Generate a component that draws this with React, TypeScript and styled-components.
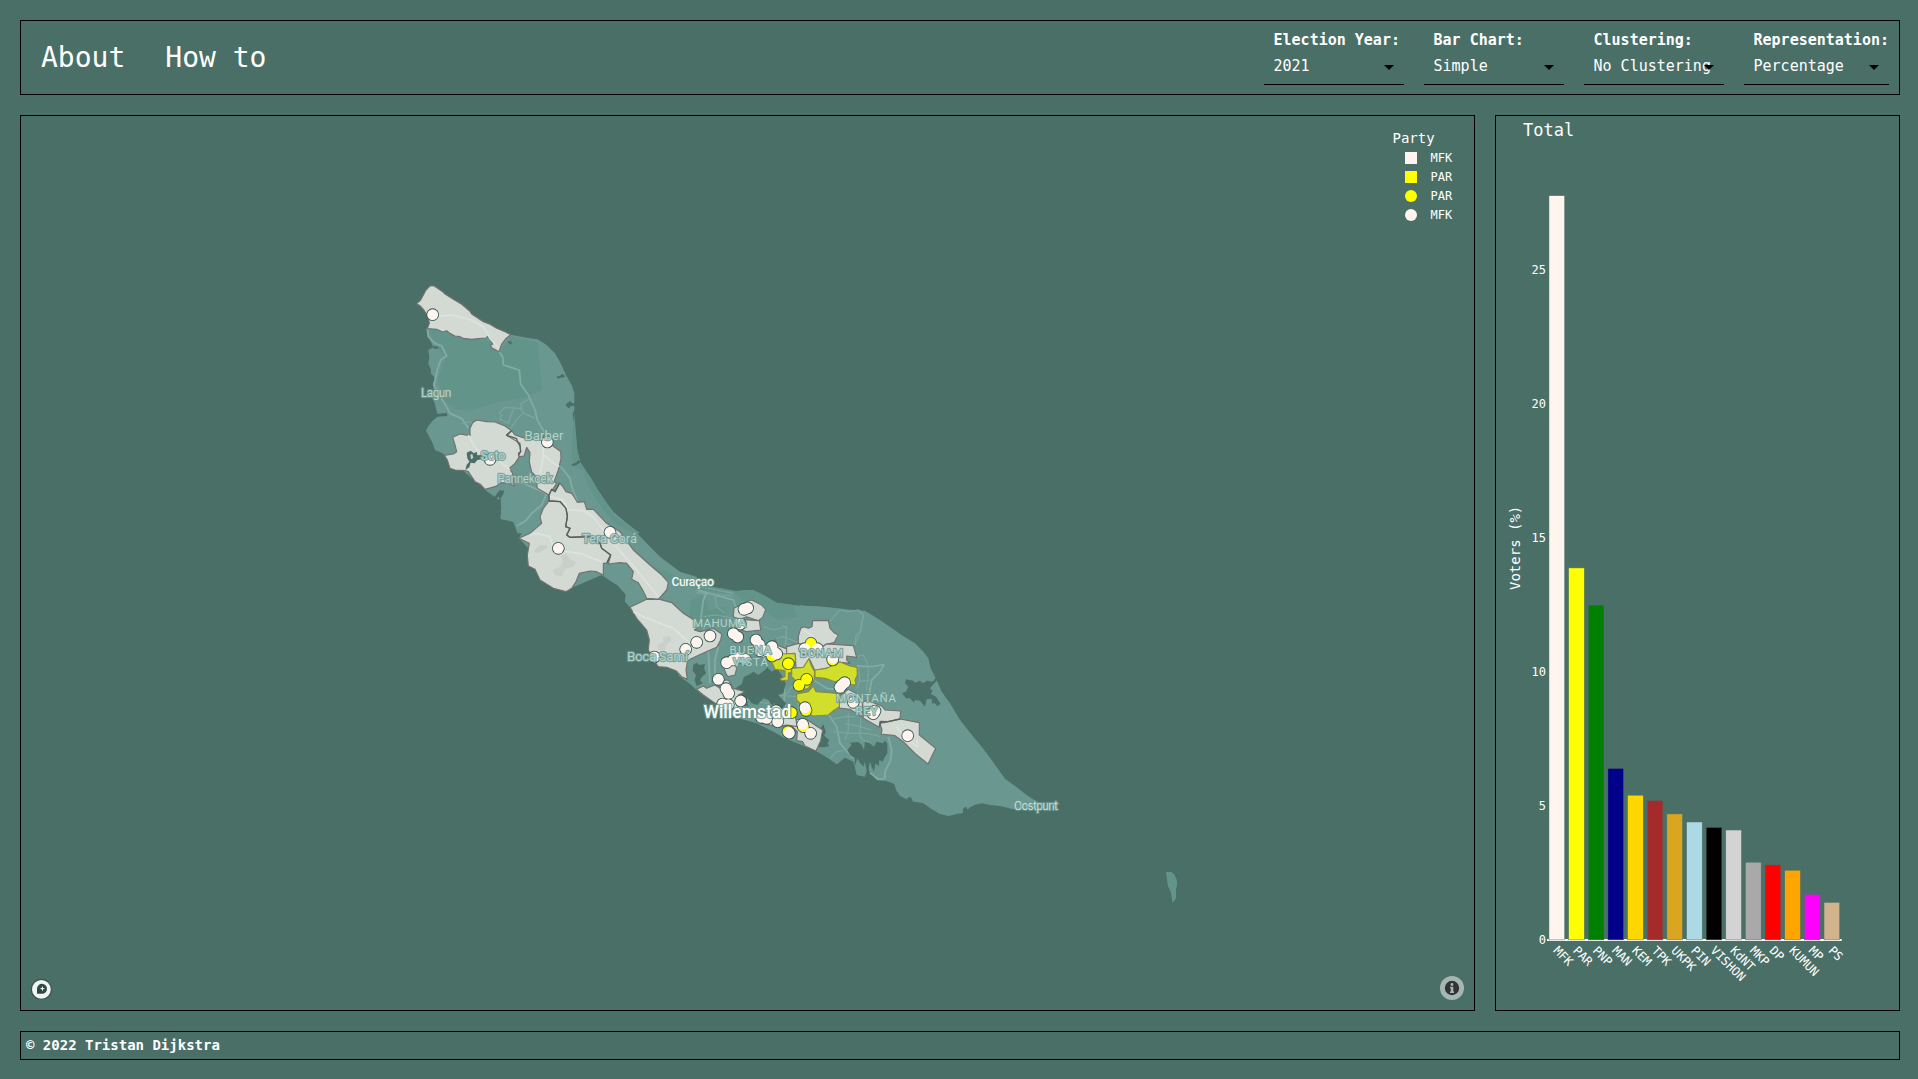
import React from "react";
import styled, { createGlobalStyle } from "styled-components";

const BG = "#4a6f67";
const MONO = '"DejaVu Sans Mono", "Liberation Mono", monospace';
const LABEL_FONT = 'Roboto, "Open Sans", sans-serif';
const SEASHELL = "#fff5ee";

const GlobalStyle = createGlobalStyle`
  * { box-sizing: border-box; }
  body { margin: 0; background: ${BG}; color: #fff; font-family: ${MONO}; }
`;

const Page = styled.div`
  display: grid;
  grid-template-columns: minmax(0, 1fr) 405px;
  grid-template-rows: 75px minmax(0, 1fr) 29px;
  gap: 20px;
  height: 1079px;
  padding: 20px 18px 19px 20px;
`;

const Header = styled.header`
  grid-column: 1 / -1;
  display: flex;
  justify-content: space-between;
  border: 1px solid #000;
`;

const Nav = styled.nav`
  display: flex;
  align-items: center;
  gap: 40px;
  padding-left: 20px;
`;

const NavLink = styled.a`
  color: #fff;
  font-size: 28px;
  line-height: 33px;
`;

const Filters = styled.div`
  display: flex;
  align-items: flex-start;
  gap: 20px;
  padding: 10px 10px 0 0;
`;

const Filter = styled.div`
  min-width: 140px;
`;

const FilterLabel = styled.div`
  padding-left: 10px;
  font-size: 15px;
  font-weight: 700;
  line-height: 18px;
`;

const FilterValue = styled.div`
  position: relative;
  height: 36px;
  padding: 8px 0 0 10px;
  border-bottom: 1px solid #000;
  font-size: 15px;
  line-height: 18px;
  white-space: nowrap;

  &::after {
    content: "";
    position: absolute;
    top: 16px;
    right: 10px;
    border: 5px solid transparent;
    border-top-color: #000;
    border-bottom-width: 0;
  }
`;

const MapPanel = styled.section`
  position: relative;
  border: 1px solid #000;
  overflow: hidden;
`;

const Canvas = styled.svg`
  display: block;
  width: 100%;
  height: 100%;
`;

const Legend = styled.aside`
  position: absolute;
  top: 13px;
  right: 20px;
  width: 61.5px;
`;

const LegendTitle = styled.div`
  font-size: 14px;
  line-height: 18px;
  padding-bottom: 1px;
`;

const LegendRow = styled.div`
  display: flex;
  align-items: center;
  gap: 14px;
  height: 19px;
  padding-left: 12px;
  font-size: 12px;
`;

const Swatch = styled.span<{ $color: string; $round?: boolean }>`
  flex: none;
  width: 12px;
  height: 12px;
  background: ${(p) => p.$color};
  border-radius: ${(p) => (p.$round ? "50%" : "0")};
`;

const ChartPanel = styled.section`
  border: 1px solid #000;
  overflow: hidden;
`;

const Footer = styled.footer`
  grid-column: 1 / -1;
  padding-left: 5px;
  border: 1px solid #000;
  font-size: 14px;
  font-weight: 700;
  line-height: 27px;
`;

const filters = [
  ["Election Year:", "2021"],
  ["Bar Chart:", "Simple"],
  ["Clustering:", "No Clustering"],
  ["Representation:", "Percentage"],
];

const legend = [
  { name: "MFK", color: SEASHELL, round: false },
  { name: "PAR", color: "#ffff00", round: false },
  { name: "PAR", color: "#ffff00", round: true },
  { name: "MFK", color: SEASHELL, round: true },
];

const parties: [string, number, string][] = [
  ["MFK", 27.77, SEASHELL],
  ["PAR", 13.88, "yellow"],
  ["PNP", 12.49, "green"],
  ["MAN", 6.4, "darkblue"],
  ["KEM", 5.4, "gold"],
  ["TPK", 5.2, "brown"],
  ["UKPK", 4.7, "goldenrod"],
  ["PIN", 4.4, "lightblue"],
  ["VISHON", 4.2, "black"],
  ["KdNT", 4.1, "lightgray"],
  ["MKP", 2.9, "darkgray"],
  ["DP", 2.8, "red"],
  ["KUMUN", 2.6, "orange"],
  ["MP", 1.7, "magenta"],
  ["PS", 1.4, "tan"],
];

/* Map geometry is kept in tiles: each has an origin on the page and three units per pixel. */
type Tile = { x: number; y: number };
const NORTH: Tile = { x: 400, y: 270 };
const WEST: Tile = { x: 420, y: 400 };
const HARBOUR: Tile = { x: 600, y: 560 };
const CENTRE: Tile = { x: 680, y: 580 };
const EAST: Tile = { x: 800, y: 580 };
const KLEIN: Tile = { x: 1130, y: 850 };

type Kind = "land" | "park" | "water" | "white" | "yellow" | "road" | "lightRoad" | "border" | "shade" | "thinRoad";

const styles: Record<Kind, React.SVGProps<SVGPolylineElement>> = {
  land: { fill: "#6a978f" },
  park: { fill: "#62948a" },
  water: { fill: BG },
  white: { fill: "#d3dad4", stroke: "#73716f", strokeWidth: 3.4 },
  yellow: { fill: "#d1df2b", stroke: "#8b8a3c", strokeWidth: 3.4 },
  road: { fill: "none", stroke: "#82aba3", strokeWidth: 5.5 },
  thinRoad: { fill: "none", stroke: "#7ba69d", strokeWidth: 3.6 },
  lightRoad: { fill: "none", stroke: "#dde3de", strokeWidth: 5 },
  border: { fill: "none", stroke: "#5d5f5d", strokeWidth: 4 },
  shade: { fill: "#c9cfc9" },
};

const shapes: [Tile, Kind, string][] = [
  [NORTH, "land", "82,176 332,194 380,203 413,208 440,225 465,250 483,282 498,315 515,345 523,370 523,420 518,432 525,480 532,540 540,575 550,590 570,620 590,655 610,685 640,725 680,760 720,790 352,790 340,755 304,748 302,715 297,698 282,680 255,658 140,560 125,548 105,540 98,520 88,500 78,482 85,468 98,452 112,440 142,438 140,428 112,432 104,400 98,385 102,365 98,340 105,330 102,320 92,310 93,300 85,282 88,262 85,240 100,232 95,220 85,200"],
  [WEST, "land", "250,230 480,185 488,200 510,230 530,265 560,310 580,345 620,375 650,398 690,440 720,470 780,515 830,530 830,660 700,660 630,622 615,605 618,580 600,560 575,545 545,525 440,570 297,415 305,400 292,385 285,368 270,362 241,356 244,330 237,310 220,290 195,270"],
  [HARBOUR, "land", "-20,-80 115,0 150,15 200,35 240,55 300,75 380,88 410,94 460,90 490,105 530,130 560,137 600,140 600,550 570,535 530,505 470,490 400,470 345,430 300,400 270,372 240,350 90,142 75,122 78,105 60,85 45,65 20,48 0,45"],
  [CENTRE, "land", "160,34 200,30 220,32 250,45 290,68 340,75 370,78 430,80 500,88 500,505 460,545 445,535 408,513 315,475 280,455 230,430 200,410 160,390"],
  [EAST, "land", "0,76 60,80 130,88 195,92 240,120 305,165 345,190 370,215 385,235 392,265 405,290 412,305 425,335 450,370 480,420 520,470 545,500 575,540 615,596 645,618 680,645 715,668 700,680 640,688 600,678 575,676 545,670 525,674 510,682 495,698 470,702 445,708 420,702 395,688 370,670 330,663 300,648 288,630 283,612 262,604 230,600 208,575 204,560 195,590 170,585 164,560 160,545 135,533 110,553 85,535 45,510 0,480"],
  [KLEIN, "park", "108,66 124,66 134,74 141,92 141,106 138,118 138,145 132,154 126,157 126,146 122,125 114,108 111,90"],

  [NORTH, "park", "86,180 140,184 200,207 275,212 300,245 332,198 413,218 426,360 370,385 300,394 210,422 165,416 130,390 113,330 138,262 100,222"],
  [NORTH, "park", "523,430 527,480 532,540 540,575 550,600 520,590 514,555 517,500"],
  [WEST, "park", "488,200 510,230 530,265 560,310 580,345 620,375 650,398 625,392 580,365 545,320 505,260"],
  [HARBOUR, "park", "270,125 305,105 330,150 380,140 375,175 330,190 280,215 270,200"],
  [HARBOUR, "park", "115,0 150,15 200,35 240,55 300,75 380,88 370,100 290,86 230,70 160,38"],
  [CENTRE, "park", "160,34 220,32 250,45 290,68 340,75 350,110 290,120 240,80 190,62"],
  [NORTH, "water", "470,318 480,319 484,312 494,316 494,322 480,323 474,327"],
  [NORTH, "water", "497,402 505,398 510,392 516,400 524,400 524,407 512,408 508,415 500,410"],
  [NORTH, "water", "512,584 528,578 534,570 542,577 530,584 520,588"],
  [NORTH, "water", "98,228 116,230 114,236 102,236"],
  [NORTH, "water", "324,215 332,212 337,219 328,224"],
  [NORTH, "water", "290,672 300,660 312,664 306,676 302,683 294,680 288,690 284,680"],
  [WEST, "water", "195,270 237,300 240,276 252,270 250,282 242,296 244,330"],

  [NORTH, "road", "82,176 85,200 105,220 125,228 140,258 122,270 112,300 102,345 125,385 150,430 185,445 205,475"],
  [NORTH, "road", "297,245 308,260 310,285 358,300 362,342 385,375 405,420 412,450 435,490"],
  [NORTH, "thinRoad", "300,448 305,435 298,428 315,412 365,416 362,402 388,388"],
  [NORTH, "thinRoad", "340,418 330,445 325,460 300,448"],
  [NORTH, "thinRoad", "370,428 345,455 330,480"],
  [NORTH, "thinRoad", "365,416 372,430 405,445"],
  [NORTH, "thinRoad", "185,460 210,455 222,465"],
  [NORTH, "road", "482,590 510,625 515,650 530,690 560,740"],
  [NORTH, "road", "340,635 370,640 440,670 425,705 395,730 378,752 350,768"],

  [HARBOUR, "road", "290,90 320,98 400,120 410,150 400,200"],
  [HARBOUR, "thinRoad", "290,78 400,100"],
  [HARBOUR, "thinRoad", "288,98 398,108"],
  [HARBOUR, "road", "320,98 310,120 302,180 320,230 325,270 330,370"],
  [HARBOUR, "thinRoad", "310,170 350,165 400,175"],
  [HARBOUR, "thinRoad", "345,106 350,140 375,160"],
  [HARBOUR, "thinRoad", "410,150 450,210 510,260 540,260"],
  [HARBOUR, "thinRoad", "490,200 520,210 560,200 555,260"],
  [HARBOUR, "thinRoad", "530,235 550,230 600,250"],
  [HARBOUR, "road", "345,360 345,300 355,260"],
  [HARBOUR, "thinRoad", "440,420 500,430 560,400 600,350"],
  [CENTRE, "thinRoad", "308,135 320,145 318,190 350,200"],
  [CENTRE, "thinRoad", "450,125 478,90 505,95 535,90 550,105 540,155 525,195"],
  [CENTRE, "road", "315,300 312,370 345,440"],
  [CENTRE, "road", "400,300 440,325 480,330 510,335"],
  [CENTRE, "thinRoad", "290,345 350,350 360,410"],
  [EAST, "thinRoad", "165,230 190,225 202,250 205,280 200,330"],
  [EAST, "thinRoad", "175,90 190,105 182,155 168,165 165,195"],
  [EAST, "road", "170,258 215,260 252,254 240,275 215,300 208,340"],
  [EAST, "thinRoad", "175,305 210,300"],
  [EAST, "thinRoad", "175,262 180,300 170,325"],
  [EAST, "road", "85,402 110,440 120,490 160,535"],
  [EAST, "thinRoad", "90,418 140,410 165,410"],
  [EAST, "thinRoad", "100,455 150,460 205,460 240,470"],
  [EAST, "thinRoad", "145,400 145,450 135,480"],
  [EAST, "thinRoad", "182,415 180,470 190,480 212,490 215,515"],
  [EAST, "thinRoad", "135,430 180,440 215,450"],
  [EAST, "road", "265,470 275,510 272,540 255,575 255,595 235,598 210,578"],
  [EAST, "thinRoad", "90,535 110,515 140,510"],

  [EAST, "water", "306,340 318,335 325,320 315,310 318,298 340,302 345,308 360,302 368,310 382,302 398,305 410,290 412,300 398,315 390,325 398,332 392,342 408,350 422,372 412,378 402,368 396,372 395,356 380,358 375,380 360,362 345,360 342,368 330,355 318,355"],
  [EAST, "water", "142,510 155,495 150,488 175,486 185,495 192,510 195,485 210,490 222,500 230,485 250,490 254,482 262,490 262,520 255,530 248,545 238,540 236,558 226,550 222,575 215,560 210,545 202,580 194,545 190,560 178,545 172,535 164,560 165,535 150,525"],
  [EAST, "water", "62,445 70,432 76,455 70,465 88,480 82,490 88,498 72,502 55,500"],
  [EAST, "water", "255,610 262,622 278,624 286,632 270,620"],
  [EAST, "water", "320,655 332,650 338,662 330,668"],
  [EAST, "water", "488,700 490,684 498,680 504,690 496,698"],
  [CENTRE, "water", "40,255 50,248 58,255 75,252 72,265 78,280 66,290 60,300 68,310 50,318 44,300 48,285 38,272"],
  [CENTRE, "water", "160,330 185,312 192,290 205,285 220,275 235,285 255,270 262,262 275,275 290,265 305,285 318,310 310,340 295,345 318,370 305,395 285,370 275,375 265,360 250,355 232,375 215,370 200,352 205,380 190,372 195,350 170,348 155,342 130,320 118,318 128,310"],
  [CENTRE, "water", "420,465 428,455 430,440 438,455 430,470 445,480 438,500 418,502"],

  [NORTH, "white", "50,101 62,90 78,60 91,47 103,48 128,65 135,72 160,88 185,103 210,124 215,132 250,155 270,163 290,175 315,185 332,194 318,205 305,222 297,245 275,233 272,225 279,222 275,210 265,198 258,204 235,206 215,208 190,205 180,200 165,198 150,190 140,182 128,186 110,178 82,176 88,160 85,140 70,118 60,107"],
  [NORTH, "white", "218,458 230,450 260,455 285,456 315,468 335,482 320,494 348,505 362,530 362,545 355,565 345,580 328,595 338,610 342,648 325,640 305,638 285,650 255,658 240,642 225,635 215,620 205,605 195,602 165,600 150,595 142,570 133,556 160,552 170,545 165,525 158,502 180,492 210,497 210,475"],
  [NORTH, "white", "335,482 345,495 370,503 390,510 430,500 455,525 482,545 483,565 475,600 462,635 470,640 447,675 430,665 412,655 408,620 395,606 388,575 390,548 380,532 372,558 358,560 355,550 362,545 360,520 320,496"],
  [WEST, "white", "387,303 387,285 395,268 405,275 418,248 430,262 438,275 455,280 462,290 472,307 493,305 500,328 520,328 560,370 600,395 640,450 690,495 725,525 745,548 740,570 715,598 680,595 668,570 655,548 635,538 640,515 620,490 600,488 565,492 572,465 545,445 540,430 510,410 450,412 440,405 450,385 437,380 442,350 438,325 420,305"],
  [WEST, "white", "387,303 420,305 438,325 442,350 437,380 450,385 440,405 450,412 510,410 540,430 545,445 572,465 560,490 550,490 550,525 530,515 510,513 478,520 468,545 455,565 438,575 400,565 360,540 345,508 325,498 322,465 328,430 318,425 297,415 330,400 365,370 360,350 370,325"],
  [WEST, "shade", "398,510 420,500 430,485 422,468 440,462 450,478 468,485 460,500 440,505 430,515 428,530 405,525"],
  [WEST, "shade", "340,455 360,435 380,435 382,445 355,460"],
  [HARBOUR, "white", "90,142 140,118 180,118 215,128 250,160 290,185 297,200 283,210 300,215 340,205 365,222 362,240 350,262 325,272 270,298 262,305 258,330 262,358 245,350 228,332 200,322 175,320 160,300 145,270 148,240 140,210 110,175"],
  [HARBOUR, "shade", "172,255 190,245 188,230 210,228 215,240 200,255 195,270 175,270"],
  [HARBOUR, "white", "400,170 402,145 440,125 455,120 485,135 497,148 488,172 475,182 440,170 420,178"],
  [HARBOUR, "white", "400,190 420,178 478,182 482,210 440,215 405,205"],
  [HARBOUR, "white", "380,345 370,322 395,300 410,325 405,345 385,350"],
  [HARBOUR, "white", "290,388 310,378 320,385 345,375 360,385 358,362 385,360 400,385 435,395 415,405 440,425 430,455 380,440 345,430 310,405"],
  [CENTRE, "white", "205,210 240,190 275,192 285,178 290,195 315,205 345,210 345,222 300,228 270,240 235,228"],
  [CENTRE, "white", "346,218 355,200 355,170 362,145 372,140 385,145 396,140 398,122 445,121 450,145 462,158 475,165 462,188 440,192 425,200 350,225"],
  [CENTRE, "white", "320,200 355,190 420,205 440,192 520,197 530,232 500,228 500,240 510,250 480,247 450,262 405,272 388,236 375,265 348,262 346,225 320,225"],
  [CENTRE, "white", "330,432 352,418 382,420 428,450 422,482 408,513 375,498 368,485 350,482 352,455"],
  [CENTRE, "white", "225,400 250,385 345,405 352,440 320,435 290,440 240,428"],
  [EAST, "white", "118,350 145,328 165,338 188,360 185,410 150,388 118,384"],
  [EAST, "white", "188,365 205,362 245,378 255,390 302,393 300,417 265,425 240,424 238,442 190,415"],
  [EAST, "white", "240,430 265,425 300,417 358,428 358,465 407,505 384,552 345,520 310,485 285,467 243,462 246,450"],
  [CENTRE, "yellow", "270,235 305,222 345,220 347,240 335,258 335,275 325,280 325,300 305,302 300,296 315,290 315,272 285,268"],
  [CENTRE, "yellow", "335,265 370,262 387,236 393,255 404,275 402,300 385,325 360,332 342,325 345,300 335,290"],
  [CENTRE, "yellow", "405,270 440,265 480,246 510,258 531,262 532,285 525,300 528,315 500,312 490,302 465,305 435,295 405,292"],
  [CENTRE, "yellow", "350,342 385,335 400,318 408,335 450,338 480,342 478,380 460,392 445,405 400,408 375,395 370,380 350,360"],

  [NORTH, "lightRoad", "98,140 155,135 215,150 250,170 270,205 295,235"],
  [NORTH, "lightRoad", "205,495 220,525 250,560 300,575 330,600"],
  [NORTH, "lightRoad", "430,520 430,555 455,575 478,590"],
  [NORTH, "lightRoad", "430,560 420,610"],
  [WEST, "lightRoad", "390,290 430,300 445,330 490,332 520,350 580,430 650,510 715,590"],
  [WEST, "lightRoad", "330,405 350,400 390,410 400,450 480,460 545,485"],
  [HARBOUR, "lightRoad", "100,155 140,175 220,205 270,250"],
  [CENTRE, "lightRoad", "372,150 400,170 410,200"],
  [EAST, "lightRoad", "290,440 320,480 355,500 350,480"],
  [NORTH, "water", "200,548 212,542 222,550 230,545 232,556 245,555 248,568 232,570 224,580 212,578 208,592 196,600 200,584 208,575 202,565"],
  [NORTH, "shade", "211,554 217,552 220,564 213,568"],
  [NORTH, "border", "335,482 320,496 350,506 352,515 360,528 362,545 355,556"],
  [NORTH, "border", "447,692 447,675 455,658 465,665 478,642"],
  [WEST, "border", "387,303 420,305 438,325 442,350 437,380 450,385 440,405 450,412 510,410 540,430 545,445 572,465 560,490"],
  [EAST, "border", "238,438 242,426 265,425 300,417"],
];

/* Polling stations: tile, winning party, then x,y pairs; drawn in order. */
const stations: [Tile, "w" | "y", number[][]][] = [
  [NORTH, "w", [[98, 134], [442, 516], [270, 568]]],
  [WEST, "w", [[570, 397], [415, 445]]],
  [HARBOUR, "w", [[163, 291], [257, 268], [290, 247], [330, 228], [432, 148], [443, 144], [421, 192], [400, 221], [413, 231]]],
  [CENTRE, "y", [[276, 228], [393, 190]]],
  [HARBOUR, "w", [[468, 240], [478, 254], [480, 272], [500, 272], [516, 260], [525, 278], [530, 282], [436, 298], [415, 292], [400, 300], [380, 308], [355, 358], [378, 386], [386, 400], [368, 432], [385, 434], [422, 423], [484, 472], [500, 475], [528, 452], [540, 462], [533, 485]]],
  [CENTRE, "y", [[325, 251], [357, 316], [380, 298], [334, 398], [458, 240], [378, 391], [370, 440], [324, 455]]],
  [CENTRE, "w", [[374, 206], [412, 206], [459, 235], [480, 322], [486, 315], [494, 308], [375, 383], [368, 433], [392, 460], [328, 459]]],
  [EAST, "y", [[218, 399]]],
  [EAST, "w", [[160, 367], [220, 401], [225, 393], [323, 467]]],
];

type Place = { t: string; x: number; y: number; w: number; s: number; c?: string; b?: number };
const places: Place[] = [
  { t: "Lagun", x: 421, y: 397, w: 30.5, s: 12 },
  { t: "Barber", x: 524.5, y: 440, w: 39, s: 13, c: "#b2d3cc" },
  { t: "Soto", x: 480.5, y: 460, w: 25, s: 13, c: "#b2d3cc" },
  { t: "Pannekoek", x: 497.5, y: 483, w: 55, s: 12, c: "#b2d3cc" },
  { t: "Tera Corá", x: 582, y: 543, w: 55, s: 13, c: "#b2d3cc" },
  { t: "Curaçao", x: 671.5, y: 585.5, w: 42.5, s: 12.5, c: "#f1f8f6", b: 500 },
  { t: "MAHUMA", x: 693, y: 627, w: 53, s: 11.5, c: "#b2d3cc" },
  { t: "BUENA", x: 729.5, y: 653.5, w: 42, s: 11.5, c: "#b2d3cc" },
  { t: "VISTA", x: 733, y: 666, w: 35, s: 11.5, c: "#b2d3cc" },
  { t: "Boca Samí", x: 627, y: 661, w: 61, s: 13.5, c: "#b2d3cc" },
  { t: "BONAM", x: 800, y: 656.5, w: 43, s: 11.5, c: "#b2d3cc" },
  { t: "MONTAÑA", x: 836, y: 701.5, w: 60, s: 11.5, c: "#b2d3cc" },
  { t: "REY", x: 855.5, y: 714.5, w: 22, s: 11.5, c: "#b2d3cc" },
  { t: "Willemstad", x: 703.5, y: 717.5, w: 87.5, s: 17.5, c: "#ffffff", b: 500 },
  { t: "Oostpunt", x: 1014, y: 810, w: 44, s: 12, c: "#c5dcd8" },
];

const place = (t: Tile) => `translate(${t.x} ${t.y}) scale(${1 / 3})`;

function IslandMap() {
  return (
    <Canvas viewBox="21 116 1453 894">
      {shapes.map(([tile, kind, points], i) => {
        const open = styles[kind].fill === "none";
        return (
          <g key={i} transform={place(tile)}>
            {open ? (
              <polyline points={points} strokeLinejoin="round" {...styles[kind]} />
            ) : (
              <polygon points={points} strokeLinejoin="round" {...(styles[kind] as React.SVGProps<SVGPolygonElement>)} />
            )}
          </g>
        );
      })}
      {/* Outlines go below every fill, so that neighbouring stations merge. */}
      {stations.map(([tile, , points], i) => (
        <g key={i} transform={place(tile)} fill="#2b5150">
          {points.map(([x, y], j) => (
            <circle key={j} cx={x} cy={y} r={18.9} />
          ))}
        </g>
      ))}
      {stations.map(([tile, color, points], i) => (
        <g key={i} transform={place(tile)} fill={color === "w" ? SEASHELL : "yellow"}>
          {points.map(([x, y], j) => (
            <circle key={j} cx={x} cy={y} r={16.4} />
          ))}
        </g>
      ))}
      {places.map((p) => (
        <text
          key={p.t}
          x={p.x}
          y={p.y}
          textLength={p.w}
          fontFamily={LABEL_FONT}
          fontSize={p.s}
          fontWeight={p.b ?? 400}
          fill={p.c ?? "#bcd8d3"}
          stroke="#6a978f"
          strokeWidth={2.4}
          strokeOpacity={0.8}
          strokeLinejoin="round"
          paintOrder="stroke"
        >
          {p.t}
        </text>
      ))}
      <g transform="translate(41.4 989.4)">
        <circle r="10" fill="#f0f4f3" stroke="#34564f" strokeWidth="1.2" />
        <path d="M-4.4 4.4V-.8A5 5 0 1 1 .8 4.4Z" fill="#2b4a44" />
        <path d="M1-3.6 1.7-1.5 3.8-.8 1.7-.1 1 2 .3-.1-1.8-.8 .3-1.5Z" fill="#f0f4f3" />
      </g>
      <g transform="translate(1452 988)">
        <circle r="12" fill="#fff" fillOpacity=".5" />
        <circle r="7.2" fill="#333" />
        <circle cy="-3.5" r="1.4" fill="#a5b7b3" />
        <path d="M-2-1.2H1.3V3.4H2V5H-2V3.4H-1.2V.2H-2Z" fill="#a5b7b3" />
      </g>
    </Canvas>
  );
}

function BarChart() {
  const zero = 939.9;
  const unit = 26.8;
  const left = 1547;
  const step = 294.7 / 15;
  return (
    <Canvas viewBox="1496 116 403 894" fill="#fff" fontFamily={MONO} fontSize="12">
      <text x="1523" y="136" fontSize="17">Total</text>
      <text transform="translate(1519.6 590) rotate(-90)" fontSize="14">Voters (%)</text>
      {[0, 5, 10, 15, 20, 25].map((v) => (
        <text key={v} x="1546" y={zero - v * unit + 4.2} textAnchor="end">{v}</text>
      ))}
      <rect x={left} y="939" width="294.7" height="2" />
      {parties.map(([name, value, color], i) => {
        const x = left + step * (i + 0.1);
        return (
          <g key={name}>
            <rect x={x} y={zero - value * unit} width={step * 0.8} height={value * unit} fill={color} stroke={BG} strokeWidth=".5" />
            <text transform={`translate(${x + 3.7} 951.3) rotate(45)`}>{name}</text>
          </g>
        );
      })}
    </Canvas>
  );
}

export default function App() {
  return (
    <>
      <GlobalStyle />
      <Page>
        <Header>
          <Nav>
            <NavLink>About</NavLink>
            <NavLink>How to</NavLink>
          </Nav>
          <Filters>
            {filters.map(([label, value]) => (
              <Filter key={label}>
                <FilterLabel>{label}</FilterLabel>
                <FilterValue>{value}</FilterValue>
              </Filter>
            ))}
          </Filters>
        </Header>
        <MapPanel>
          <IslandMap />
          <Legend>
            <LegendTitle>Party</LegendTitle>
            {legend.map((item, i) => (
              <LegendRow key={i}>
                <Swatch $color={item.color} $round={item.round} />
                {item.name}
              </LegendRow>
            ))}
          </Legend>
        </MapPanel>
        <ChartPanel>
          <BarChart />
        </ChartPanel>
        <Footer>© 2022 Tristan Dijkstra</Footer>
      </Page>
    </>
  );
}
